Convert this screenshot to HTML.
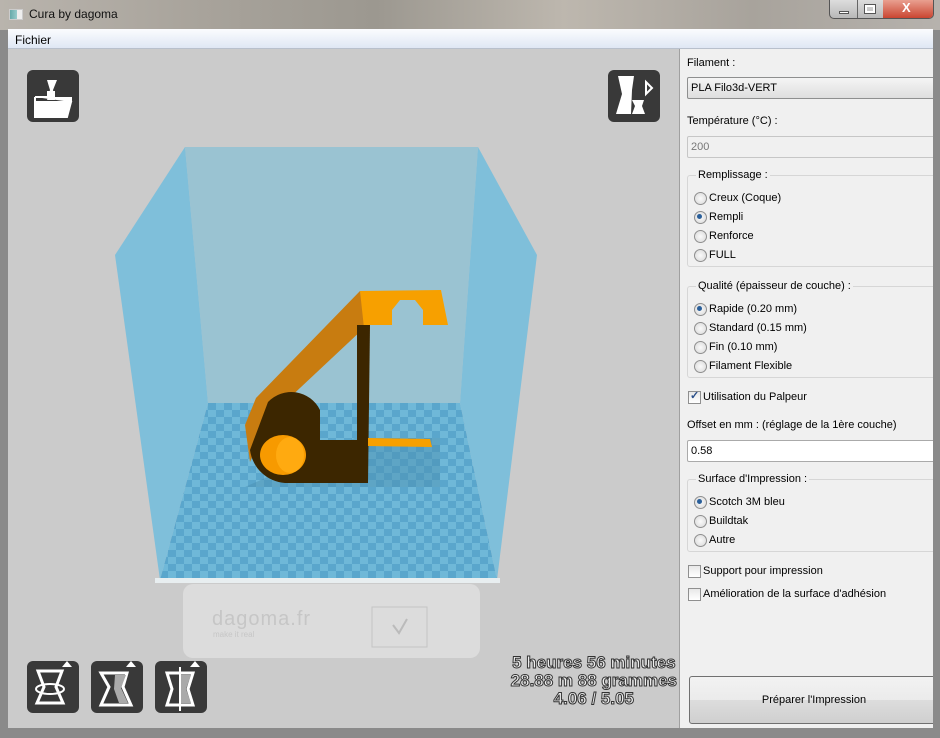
<!DOCTYPE html>
<html><head><meta charset="utf-8"><style>
*{margin:0;padding:0;box-sizing:border-box}
html,body{width:940px;height:738px;overflow:hidden}
body{background:#8a8a8a;font-family:"Liberation Sans",sans-serif;font-size:11px;color:#000;position:relative}
.abs{position:absolute}
.title{left:0;top:0;width:940px;height:30px;background:linear-gradient(90deg,#b9b4ad 0%,#a9a49c 20%,#9c9890 40%,#bdb7ae 60%,#a8a39c 80%,#b6b2ad 100%)}
.menu{left:8px;top:29px;width:925px;height:20px;background:linear-gradient(#fbfcfe,#dfe7f4);border-bottom:1px solid #b8c0cc;font-size:12px;padding:4px 0 0 7px}
.view{left:8px;top:49px;width:671px;height:679px;background:#cbcbcb;overflow:hidden}
.panel{left:679px;top:49px;width:254px;height:679px;background:#f0f0f0;border-left:1px solid #a0a0a0;overflow:hidden}
.lbl{position:absolute;left:7px;font-size:11px}
.box{position:absolute;left:7px;width:250px;height:22px;border:1px solid #a9a9a9;border-radius:2px;padding:4px 3px;font-size:11px}
.grp{position:absolute;left:7px;width:250px;border:1px solid #d6d6d6;border-radius:3px}
.gt{position:absolute;left:8px;top:-7px;background:#f0f0f0;padding:0 2px}
.rad{position:absolute;left:6px;font-size:11px;padding-left:15px}
.rad:before{content:"";position:absolute;left:0;top:0;width:11px;height:11px;border-radius:50%;border:1px solid #8f8f8f;background:radial-gradient(#fafafa,#d8d8d8)}
.on:after{content:"";position:absolute;left:3px;top:3px;width:5px;height:5px;border-radius:50%;background:#2a5f9a}
.chk{position:absolute;left:8px;padding-left:15px}
.chk:before{content:"";position:absolute;left:0;top:0;width:11px;height:11px;border:1px solid #8f8f8f;background:linear-gradient(#e8e8e8,#fff)}
.icon{position:absolute;width:52px;height:52px;background:#393939;border-radius:6px}
.stat{right:2px;top:605px;text-align:center;font-size:17px;line-height:18px;font-weight:bold;color:#eee;-webkit-text-stroke:1px #333;font-family:"Liberation Sans Narrow","Liberation Sans",sans-serif}
</style></head><body>
<div class="abs title">
 <div class="abs" style="left:9px;top:9px;width:14px;height:11px;background:linear-gradient(90deg,#6aa 0,#9cc 60%,#eee 60%);border:1px solid #ccc"></div>
 <div class="abs" style="left:29px;top:7px;font-size:12px;color:#111">Cura by dagoma</div>
 <div class="abs" style="left:829px;top:0;width:105px;height:19px;border:1px solid #555;border-top:none;border-radius:0 0 5px 5px;overflow:hidden;background:linear-gradient(#ddd,#b8b8b8)">
  <div class="abs" style="left:27px;top:0;width:1px;height:19px;background:#666"></div>
  <div class="abs" style="left:53px;top:0;width:52px;height:19px;background:linear-gradient(#e9a090,#c8402c)"></div>
  <div class="abs" style="left:9px;top:11px;width:10px;height:3px;background:#fff;border:1px solid #555"></div>
  <div class="abs" style="left:35px;top:5px;width:10px;height:8px;border:2px solid #fff;outline:1px solid #555"></div>
  <div class="abs" style="left:72px;top:0px;color:#fff;font-weight:bold;font-size:13px">X</div>
 </div>
</div>
<div class="abs menu">Fichier</div>
<div class="abs view">
<svg width="671" height="679" viewBox="8 49 671 679" style="position:absolute;left:0;top:0">
 <defs>
  <pattern id="ck" width="16" height="14" patternUnits="userSpaceOnUse" x="160" y="403">
   <rect width="16" height="14" fill="#6fb8d8"/><rect width="8" height="7" fill="#5aa6cc"/><rect x="8" y="7" width="8" height="7" fill="#5aa6cc"/>
  </pattern>
 </defs>
 <rect x="183" y="584" width="297" height="74" rx="10" fill="#dcdcdc"/>
 <text x="212" y="625" font-size="20" fill="#c6c6c6" letter-spacing="1">dagoma.fr</text>
 <text x="213" y="637" font-size="8" fill="#c6c6c6">make it real</text>
 <rect x="372" y="607" width="55" height="40" fill="none" stroke="#c4c4c4"/>
 <path d="M393 625 L399 633 L407 619" stroke="#bbb" fill="none" stroke-width="2"/>
 <polygon points="185,147 478,147 460,403 208,403" fill="#9ac3d2"/>
 <polygon points="115,255 185,147 208,403 160,580" fill="#7fbfda"/>
 <polygon points="478,147 537,255 497,580 460,403" fill="#7fbfda"/>
 <polygon points="208,403 460,403 497,580 160,580" fill="url(#ck)"/>
 <rect x="155" y="578" width="345" height="5" fill="#e8eef0"/>
 <polygon points="355,438 440,438 440,487 245,487" fill="#4a8fb0" opacity=".45"/>
 <polygon points="360,291 441,290 448,325 423,325 423,310 415,300 400,300 392,310 392,325 362,325" fill="#f7a000"/>
 <polygon points="360,291 364,328 268,418 250,462 245,425 256,398" fill="#c87c10"/>
 <path d="M268,402 A32,32 0 0 1 320,410 L320,440 L357,440 L357,483 L285,483 A38,38 0 0 1 250,450 Z" fill="#3c2600"/>
 <polygon points="357,325 370,325 368,483 357,483" fill="#3c2600"/>
 <ellipse cx="283" cy="455" rx="23" ry="20" fill="#f79a00"/>
 <ellipse cx="290" cy="455" rx="14" ry="18" fill="#ffaa10"/>
 <polygon points="368,438 430,439 434,455 432,447 368,446" fill="#f7a000"/>
</svg>
 <div class="icon" style="left:19px;top:21px"><svg width="52" height="52"><path d="M8 32 L44 32 L40 47 L8 47 Z M8 27 L8 32 M8 27 L21 27 L21 22 L27 22 L27 28 L44 28 L44 32" fill="#fff" stroke="#fff" stroke-width="2"/><path d="M20 10 L30 10 L26 20 L28 30 L20 30 L23 20 Z" fill="#fff"/></svg></div>
 <div class="icon" style="left:600px;top:21px"><svg width="52" height="52"><path d="M10 6 L26 6 L24 20 L23 44 L8 44 L14 24 Z" fill="#fff"/><path d="M24 30 L36 30 L34 36 L37 44 L24 44 L27 36 Z" fill="#fff"/><path d="M38 12 L44 18 L38 24 Z" fill="none" stroke="#fff" stroke-width="2"/></svg></div>
 <div class="icon" style="left:19px;top:612px"><svg width="52" height="52"><path d="M40 0 L45 6 L35 6 Z" fill="#fff"/><path d="M11 10 L35 10 L29 26 L36 42 L10 42 L17 26 Z" fill="none" stroke="#fff" stroke-width="3"/><ellipse cx="23" cy="28" rx="14" ry="5" fill="none" stroke="#fff" stroke-width="2"/></svg></div>
 <div class="icon" style="left:83px;top:612px"><svg width="52" height="52"><path d="M40 0 L45 6 L35 6 Z" fill="#fff"/><path d="M10 12 L36 12 L32 26 L40 44 L10 44 L18 26 Z" fill="none" stroke="#fff" stroke-width="3"/><path d="M24 14 L35 14 L30 27 L37 42 L28 42 L23 28 Z" fill="#aaa"/></svg></div>
 <div class="icon" style="left:147px;top:612px"><svg width="52" height="52"><path d="M40 0 L45 6 L35 6 Z" fill="#fff"/><path d="M12 12 L38 12 L33 28 L38 44 L12 44 L17 28 Z" fill="none" stroke="#fff" stroke-width="3"/><path d="M25 6 L25 50" stroke="#fff" stroke-width="2"/><path d="M26 14 L36 14 L31 28 L36 42 L26 42 Z" fill="#aaa"/></svg></div>
 <div class="abs stat">5 heures 56 minutes<br>28.88 m 88 grammes<br>4.06 / 5.05</div>
</div>
<div class="abs panel">
 <div class="lbl" style="top:8px">Filament :</div>
 <div class="box" style="top:28px;background:linear-gradient(#f5f5f5,#dedede);border-color:#8e8f8f">PLA Filo3d-VERT</div>
 <div class="lbl" style="top:66px">Température (°C) :</div>
 <div class="box" style="top:87px;background:#f0f0f0;color:#777;border-color:#c6c6c6">200</div>
 <div class="grp" style="top:126px;height:92px"><span class="gt">Remplissage :</span>
  <div class="rad" style="top:16px">Creux (Coque)</div>
  <div class="rad on" style="top:35px">Rempli</div>
  <div class="rad" style="top:54px">Renforce</div>
  <div class="rad" style="top:73px">FULL</div></div>
 <div class="grp" style="top:237px;height:92px"><span class="gt">Qualité (épaisseur de couche) :</span>
  <div class="rad on" style="top:16px">Rapide (0.20 mm)</div>
  <div class="rad" style="top:35px">Standard (0.15 mm)</div>
  <div class="rad" style="top:54px">Fin (0.10 mm)</div>
  <div class="rad" style="top:73px">Filament Flexible</div></div>
 <div class="chk" style="top:342px">Utilisation du Palpeur<span style="position:absolute;left:2px;top:-2px;color:#2a4f8a;font-weight:bold">✓</span></div>
 <div class="lbl" style="top:370px">Offset en mm : (réglage de la 1ère couche)</div>
 <div class="box" style="top:391px;background:#fff;border-color:#aaa">0.58</div>
 <div class="grp" style="top:430px;height:73px"><span class="gt">Surface d'Impression :</span>
  <div class="rad on" style="top:16px">Scotch 3M bleu</div>
  <div class="rad" style="top:35px">Buildtak</div>
  <div class="rad" style="top:54px">Autre</div></div>
 <div class="chk" style="top:516px">Support pour impression</div>
 <div class="chk" style="top:539px">Amélioration de la surface d'adhésion</div>
 <div class="abs" style="left:9px;top:627px;width:250px;height:48px;border:1px solid #707070;border-radius:3px;background:linear-gradient(#f2f2f2 0,#ebebeb 50%,#dddddd 50%,#cfcfcf);text-align:center;padding-top:17px">Préparer l'Impression</div>
</div>
</body></html>
